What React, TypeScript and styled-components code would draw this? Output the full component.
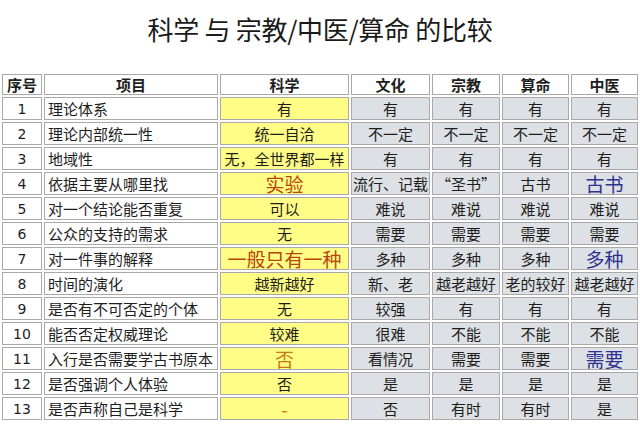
import React from "react";
import styled, { createGlobalStyle } from "styled-components";

type Tone = "plain" | "science" | "other";
type Mark = "red" | "orange" | "blue";

interface Entry {
  text: string;
  mark?: Mark;
}

interface Row {
  name: string;
  science: Entry;
  rest: Entry[];
}

const headers = ["序号", "项目", "科学", "文化", "宗教", "算命", "中医"];

const t = (text: string, mark?: Mark): Entry => ({ text, mark });

const rows: Row[] = [
  { name: "理论体系", science: t("有"), rest: [t("有"), t("有"), t("有"), t("有")] },
  { name: "理论内部统一性", science: t("统一自洽"), rest: [t("不一定"), t("不一定"), t("不一定"), t("不一定")] },
  { name: "地域性", science: t("无，全世界都一样"), rest: [t("有"), t("有"), t("有"), t("有")] },
  { name: "依据主要从哪里找", science: t("实验", "red"), rest: [t("流行、记载"), t("“圣书”"), t("古书"), t("古书", "blue")] },
  { name: "对一个结论能否重复", science: t("可以"), rest: [t("难说"), t("难说"), t("难说"), t("难说")] },
  { name: "公众的支持的需求", science: t("无"), rest: [t("需要"), t("需要"), t("需要"), t("需要")] },
  { name: "对一件事的解释", science: t("一般只有一种", "red"), rest: [t("多种"), t("多种"), t("多种"), t("多种", "blue")] },
  { name: "时间的演化", science: t("越新越好"), rest: [t("新、老"), t("越老越好"), t("老的较好"), t("越老越好")] },
  { name: "是否有不可否定的个体", science: t("无"), rest: [t("较强"), t("有"), t("有"), t("有")] },
  { name: "能否否定权威理论", science: t("较难"), rest: [t("很难"), t("不能"), t("不能"), t("不能")] },
  { name: "入行是否需要学古书原本", science: t("否", "orange"), rest: [t("看情况"), t("需要"), t("需要"), t("需要", "blue")] },
  { name: "是否强调个人体验", science: t("否"), rest: [t("是"), t("是"), t("是"), t("是")] },
  { name: "是否声称自己是科学", science: t("-", "orange"), rest: [t("否"), t("有时"), t("有时"), t("是")] },
];

const markColors: Record<Mark, string> = {
  red: "#b8460c",
  orange: "#c27a12",
  blue: "#2e3190",
};

const toneBg: Record<Tone, string> = {
  plain: "#fff",
  science: "#fffd86",
  other: "#dde0e4",
};

const Global = createGlobalStyle`
  body {
    margin: 0;
    background: #fff;
    font-family: "Noto Sans CJK SC", "Noto Sans", sans-serif;
    color: #1e1e1e;
  }
`;

const Page = styled.div`
  width: 640px;
  height: 425px;
  overflow: hidden;
`;

const Title = styled.h1`
  margin: 0;
  padding-top: 15px;
  height: 57px;
  font-size: 26px;
  line-height: 27px;
  font-weight: 400;
  text-align: center;
  letter-spacing: -0.3px;
  color: #1a1a1a;
`;

// 表格: 用 grid 排列, 每列宽度固定
const Grid = styled.div`
  display: grid;
  grid-template-columns: 40px 174px 129px 79px 68px 67px 67px;
  grid-auto-rows: 23px;
  grid-template-rows: 21px;
  gap: 2px;
  padding: 2px;
  font-size: 15px;
`;

const HeadCell = styled.div`
  box-sizing: border-box;
  border: 1px solid #a9a9a9;
  background: #fff;
  font-weight: 700;
  display: flex;
  align-items: center;
  justify-content: center;
  line-height: 1;
`;

const Cell = styled.div<{ $tone: Tone; $left?: boolean }>`
  box-sizing: border-box;
  border: 1px solid #a9a9a9;
  background: ${(p) => toneBg[p.$tone]};
  display: flex;
  align-items: center;
  justify-content: ${(p) => (p.$left ? "flex-start" : "center")};
  padding-left: ${(p) => (p.$left ? "3px" : "0")};
  line-height: 1;
  white-space: nowrap;
`;

const Num = styled.span`
  font-family: "DejaVu Sans", sans-serif;
  font-size: 14px;
`;

const Marked = styled.span<{ $mark: Mark }>`
  color: ${(p) => markColors[p.$mark]};
  font-size: 19px;
  line-height: 1;
`;

const Value = ({ entry }: { entry: Entry }) =>
  entry.mark ? <Marked $mark={entry.mark}>{entry.text}</Marked> : <>{entry.text}</>;

export default function App() {
  return (
    <Page>
      <Global />
      <Title>科学 与 宗教/中医/算命 的比较</Title>
      <Grid>
        {headers.map((h) => (
          <HeadCell key={h}>{h}</HeadCell>
        ))}
        {rows.map((row, i) => (
          <React.Fragment key={i}>
            <Cell $tone="plain">
              <Num>{i + 1}</Num>
            </Cell>
            <Cell $tone="plain" $left>
              {row.name}
            </Cell>
            <Cell $tone="science">
              <Value entry={row.science} />
            </Cell>
            {row.rest.map((e, j) => (
              <Cell key={j} $tone="other">
                <Value entry={e} />
              </Cell>
            ))}
          </React.Fragment>
        ))}
      </Grid>
    </Page>
  );
}
